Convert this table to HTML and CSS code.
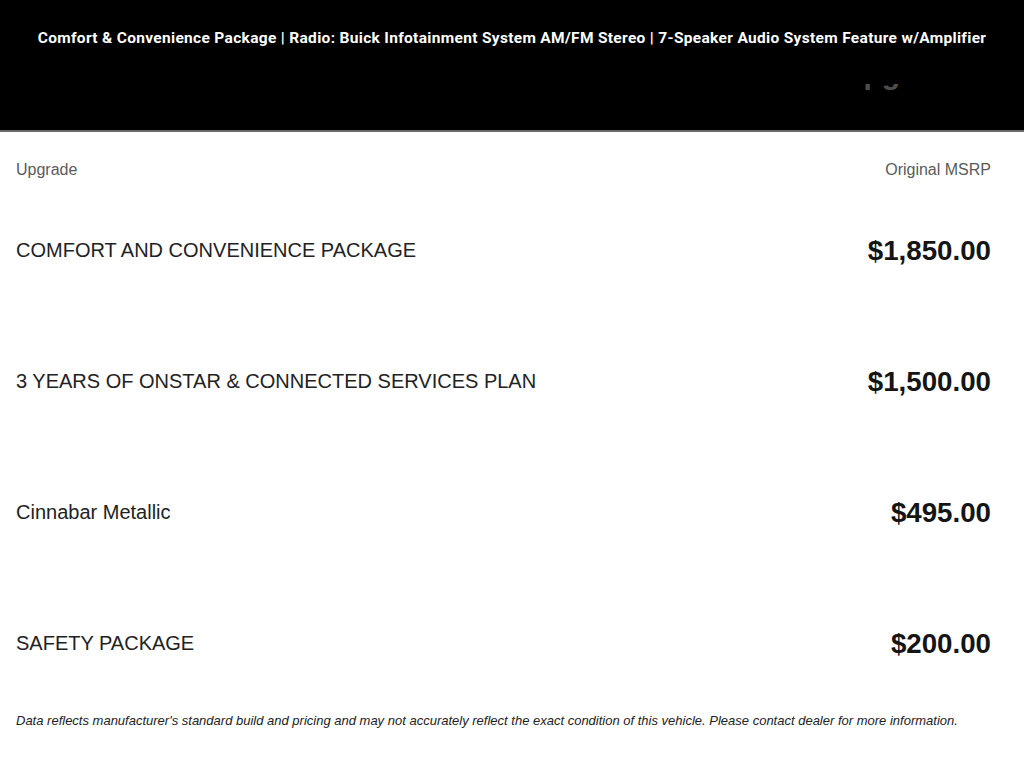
FILE: index.html
```html
<!DOCTYPE html>
<html lang="en">
<head>
<meta charset="utf-8">
<title>Selected Upgrades</title>
<link rel="stylesheet" href="styles.css">
</head>
<body>
<header class="header">
  <p class="header-title">Comfort &amp; Convenience Package | Radio: Buick Infotainment System AM/FM Stereo | 7-Speaker Audio System Feature w/Amplifier</p>
  <div class="header-clip"><span class="header-clip-text">Selected Upgrades</span></div>
</header>
<main class="content">
  <div class="table-head">
    <span>Upgrade</span>
    <span>Original MSRP</span>
  </div>
  <ul class="rows">
    <li class="row"><span class="name">COMFORT AND CONVENIENCE PACKAGE</span><span class="price">$1,850.00</span></li>
    <li class="row"><span class="name">3 YEARS OF ONSTAR &amp; CONNECTED SERVICES PLAN</span><span class="price">$1,500.00</span></li>
    <li class="row"><span class="name">Cinnabar Metallic</span><span class="price">$495.00</span></li>
    <li class="row"><span class="name">SAFETY PACKAGE</span><span class="price">$200.00</span></li>
  </ul>
  <p class="disclaimer">Data reflects manufacturer's standard build and pricing and may not accurately reflect the exact condition of this vehicle. Please contact dealer for more information.</p>
</main>
</body>
</html>
```
FILE: styles.css
```css
* { box-sizing: border-box; }
html, body { margin: 0; padding: 0; background: #fff; }
body { font-family: "Liberation Sans", Arial, sans-serif; color: #222; width: 1024px; height: 768px; overflow: hidden; }

.header {
  background: #000;
  height: 132px;
  border-bottom: 2px solid #6a6a6a;
  display: flex;
  flex-direction: column;
  align-items: center;
  padding-top: 29px;
}
.header-title {
  margin: 0;
  color: #fff;
  font-family: Roboto, "Liberation Sans", sans-serif;
  font-weight: 700;
  font-size: 15.5px;
  letter-spacing: 0.32px;
  line-height: 18px;
  white-space: nowrap;
}
.header-clip {
  align-self: flex-end;
  margin: 37px 62px 0 0;
  width: 252px;
  height: 8px;
  overflow: hidden;
  position: relative;
  opacity: 0.3;
}
.header-clip-text {
  position: absolute;
  left: 0;
  top: -25px;
  color: #fff;
  font-size: 30px;
  line-height: 30px;
  font-weight: 700;
  white-space: nowrap;
}

.content { padding: 0 33px 0 16px; }
.table-head {
  display: flex;
  justify-content: space-between;
  color: #5a5a5a;
  font-size: 16px;
  line-height: 18px;
  margin-top: 29px;
}
.rows { list-style: none; margin: 6px 0 0; padding: 0; }
.row {
  display: flex;
  justify-content: space-between;
  align-items: center;
  height: 131px;
}
.name { font-size: 20px; color: #222; }
.price { font-size: 27.7px; font-weight: 700; color: #151515; }
.disclaimer {
  margin: 4px 0 0;
  font-size: 13px;
  line-height: 15px;
  font-style: italic;
  color: #222;
}
```
